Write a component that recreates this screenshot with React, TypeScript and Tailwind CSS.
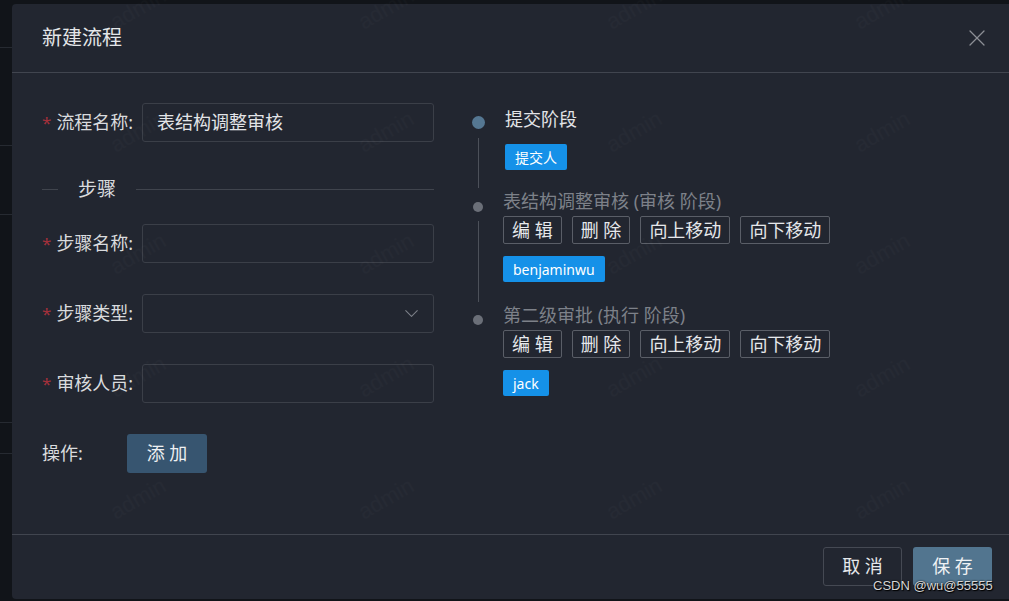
import React from "react";
import { ChevronDown, X } from "lucide-react";

const font = { fontFamily: '"Noto Sans", "Noto Sans CJK SC", sans-serif' };

function Label({ text, star = true }: { text: string; star?: boolean }) {
  return (
    <div className="flex w-[100px] shrink-0 items-center text-[18px] text-[#d9dbde]">
      {star && <span className="mr-[5px] text-[17px] text-[#a3303b]">*</span>}
      <span>{text}</span>
    </div>
  );
}

function OutlineBtn({ children }: { children: React.ReactNode }) {
  return (
    <div className="flex h-[28px] items-center rounded-[2px] border border-[#5a5e67] px-[8px] text-[18px] leading-none text-[#e6e8eb]">
      {children}
    </div>
  );
}

function Tag({ children }: { children: React.ReactNode }) {
  return (
    <div className="flex h-[26px] w-fit items-center rounded-[2px] bg-[#1591e8] px-[10px] text-[14px] text-white">
      {children}
    </div>
  );
}

function StepButtons() {
  return (
    <div className="mt-[4px] flex gap-[10px]">
      <OutlineBtn>编 辑</OutlineBtn>
      <OutlineBtn>删 除</OutlineBtn>
      <OutlineBtn>向上移动</OutlineBtn>
      <OutlineBtn>向下移动</OutlineBtn>
    </div>
  );
}

export default function App() {
  const marks: { x: number; y: number }[] = [];
  for (let r = 0; r < 5; r++) {
    for (let c = 0; c < 4; c++) {
      marks.push({ x: 108 + c * 248, y: -8 + r * 122.5 });
    }
  }
  return (
    <div className="relative flex h-[601px] w-[1009px] overflow-hidden bg-[#111419]" style={font}>
      {/* left background strip */}
      <div className="flex w-[12px] shrink-0 flex-col">
        <div className="h-[48px] border-b border-[#262a31]" />
        <div className="h-[98px] border-b border-[#262a31]" />
        <div className="h-[69px] border-b border-[#262a31]" />
        <div className="h-[208px] border-b border-[#262a31]" />
        <div className="h-[31px] border-b border-[#262a31]" />
      </div>

      {/* modal */}
      <div className="mt-[4px] flex h-[595px] w-[997px] shrink-0 flex-col rounded-l-[4px] bg-[#222630]">
        {/* header */}
        <div className="flex h-[69px] shrink-0 items-center justify-between border-b border-[#41454f] pl-[30px] pr-[18px]">
          <div className="text-[20px] text-[#e4e6e9]">新建流程</div>
          <X size={28} strokeWidth={1.1} className="text-[#8c8f95]" />
        </div>

        {/* body */}
        <div className="flex flex-1 px-[30px] pt-[30px]">
          {/* left form */}
          <div className="flex w-[392px] shrink-0 flex-col">
            <div className="flex h-[39px] items-center">
              <Label text="流程名称:" />
              <div className="flex h-[39px] w-[292px] items-center rounded-[3px] border border-[#3b3f48] px-[14px] text-[18px] text-[#e2e4e7]">
                表结构调整审核
              </div>
            </div>

            <div className="mt-[36px] flex h-[22px] items-center">
              <div className="h-px w-[16px] bg-[#40444d]" />
              <div className="px-[20px] text-[19px] leading-[22px] text-[#d9dbde]">步骤</div>
              <div className="h-px flex-1 bg-[#40444d]" />
            </div>

            <div className="mt-[24px] flex h-[39px] items-center">
              <Label text="步骤名称:" />
              <div className="h-[39px] w-[292px] rounded-[3px] border border-[#3b3f48]" />
            </div>

            <div className="mt-[31px] flex h-[39px] items-center">
              <Label text="步骤类型:" />
              <div className="flex h-[39px] w-[292px] items-center justify-end rounded-[3px] border border-[#3b3f48] pr-[10px]">
                <ChevronDown size={23} strokeWidth={1.1} className="text-[#7c8088]" />
              </div>
            </div>

            <div className="mt-[31px] flex h-[39px] items-center">
              <Label text="审核人员:" />
              <div className="h-[39px] w-[292px] rounded-[3px] border border-[#3b3f48]" />
            </div>

            <div className="mt-[31px] flex h-[39px] items-center">
              <div className="w-[85px] text-[18px] text-[#d9dbde]">操作:</div>
              <div className="flex h-[39px] w-[80px] items-center justify-center rounded-[3px] bg-[#375570] text-[18px] text-[#eef0f2]">
                添 加
              </div>
            </div>
          </div>

          {/* right timeline */}
          <div className="ml-[36px] flex flex-col pt-[5px]">
            {/* item 1 */}
            <div className="flex">
              <div className="flex w-[16px] shrink-0 flex-col items-center">
                <div className="mt-[8px] h-[13px] w-[13px] rounded-full bg-[#557792]" />
                <div className="mb-[2px] mt-[9px] w-px flex-1 bg-[#4c5059]" />
              </div>
              <div className="ml-[17px] flex flex-col pb-[20px]">
                <div className="h-[22px] pl-[2px] text-[18px] leading-[22px] text-[#e2e4e7]">提交阶段</div>
                <div className="mt-[14px] pl-[2px]">
                  <Tag>提交人</Tag>
                </div>
              </div>
            </div>

            {/* item 2 */}
            <div className="flex">
              <div className="flex w-[16px] shrink-0 flex-col items-center">
                <div className="mt-[12px] h-[10px] w-[10px] rounded-full bg-[#6b6f78]" />
                <div className="mb-[2px] mt-[9px] w-px flex-1 bg-[#4c5059]" />
              </div>
              <div className="ml-[17px] flex flex-col pb-[22px]">
                <div className="h-[22px] text-[18px] leading-[22px] text-[#7d8189]">表结构调整审核 (审核 阶段)</div>
                <StepButtons />
                <div className="mt-[12px]">
                  <Tag>benjaminwu</Tag>
                </div>
              </div>
            </div>

            {/* item 3 */}
            <div className="flex">
              <div className="flex w-[16px] shrink-0 flex-col items-center">
                <div className="mt-[11px] h-[10px] w-[10px] rounded-full bg-[#6b6f78]" />
              </div>
              <div className="ml-[17px] flex flex-col">
                <div className="h-[22px] text-[18px] leading-[22px] text-[#7d8189]">第二级审批 (执行 阶段)</div>
                <StepButtons />
                <div className="mt-[12px]">
                  <Tag>jack</Tag>
                </div>
              </div>
            </div>
          </div>
        </div>

        {/* footer */}
        <div className="flex h-[65px] shrink-0 items-start justify-end gap-[11px] border-t border-[#41454f] pr-[17px] pt-[12px]">
          <div className="flex h-[39px] w-[79px] items-center justify-center rounded-[3px] border border-[#454953] text-[18px] text-[#e6e8eb]">
            取 消
          </div>
          <div className="flex h-[39px] w-[79px] items-center justify-center rounded-[3px] bg-[#52758f] text-[18px] text-[#f0f2f4]">
            保 存
          </div>
        </div>
      </div>

      {/* watermarks */}
      <div className="pointer-events-none absolute inset-0">
        {marks.map((m, i) => (
          <div
            key={i}
            className="absolute -rotate-[30deg] text-[22px] text-white/[0.018]"
            style={{ left: m.x, top: m.y, fontFamily: '"Liberation Sans", sans-serif' }}
          >
            admin
          </div>
        ))}
      </div>

      {/* CSDN watermark */}
      <div
        className="pointer-events-none absolute left-[873px] top-[577px] text-[13px] leading-[17px] text-[#d6d6d6] [text-shadow:0_0_2px_#000,1px_1px_1px_#000]"
        style={{ fontFamily: '"Liberation Sans", sans-serif' }}
      >
        CSDN @wu@55555
      </div>
    </div>
  );
}
